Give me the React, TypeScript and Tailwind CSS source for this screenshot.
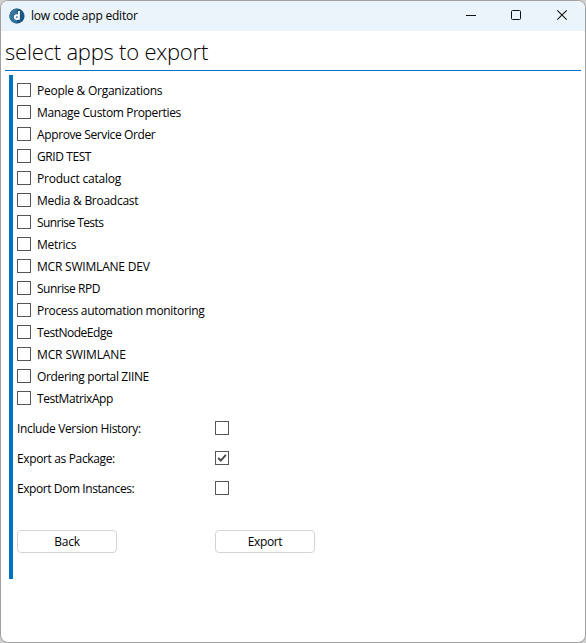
const apps: [string, string][] = [
  ['People & Organizations', 'tracking-[-0.26px]'],
  ['Manage Custom Properties', 'tracking-[-0.35px]'],
  ['Approve Service Order', 'tracking-[-0.38px]'],
  ['GRID TEST', 'tracking-[-0.42px]'],
  ['Product catalog', 'tracking-[-0.22px]'],
  ['Media & Broadcast', 'tracking-[-0.27px]'],
  ['Sunrise Tests', 'tracking-[-0.58px]'],
  ['Metrics', 'tracking-[-0.3px]'],
  ['MCR SWIMLANE DEV', 'tracking-[-0.2px]'],
  ['Sunrise RPD', 'tracking-[-0.48px]'],
  ['Process automation monitoring', 'tracking-[-0.32px]'],
  ['TestNodeEdge', 'tracking-[-0.48px]'],
  ['MCR SWIMLANE', 'tracking-[-0.12px]'],
  ['Ordering portal ZIINE', 'tracking-[-0.34px]'],
  ['TestMatrixApp', 'tracking-[-0.44px]'],
];

const options: { label: string; tracking: string; checked: boolean }[] = [
  { label: 'Include Version History:', tracking: 'tracking-[-0.36px]', checked: false },
  { label: 'Export as Package:', tracking: 'tracking-[-0.36px]', checked: true },
  { label: 'Export Dom Instances:', tracking: 'tracking-[-0.42px]', checked: false },
];

function CheckBox({ checked = false }: { checked?: boolean }) {
  return (
    <span
      role="checkbox"
      aria-checked={checked}
      className="flex size-[14px] shrink-0 items-center justify-center border border-[#555555] bg-white"
    >
      {checked && (
        <svg width="12" height="12" viewBox="0 0 12 12" fill="none" className="shrink-0">
          <path d="M2.2 6 4.8 8.6 9.9 2.9" stroke="#4a4a4a" strokeWidth="2" />
        </svg>
      )}
    </span>
  );
}

function TitleBar() {
  return (
    <header className="flex h-[30px] shrink-0 items-center bg-[#ebf4fa] pl-2">
      <svg width="16" height="16" viewBox="0 0 16 16" className="shrink-0">
        <circle cx="8" cy="8" r="7.6" fill="#1b5680" />
        <path d="M8 .4a7.6 7.6 0 0 0 0 15.2z" fill="#34749b" />
        <path d="M9.9 3v8.8M9.7 9.1a1.9 1.9 0 1 1-3.8 0 1.9 1.9 0 0 1 3.8 0z" stroke="#fff" strokeWidth="1.9" fill="none" />
      </svg>
      <span className="ml-[6px] text-[12px] tracking-[-0.22px]">low code app editor</span>
      <div className="ml-auto flex h-full items-center text-[#111]">
        <svg width="46" height="30" viewBox="0 0 46 30" fill="none" stroke="currentColor">
          <path d="M19 14.5h10" />
        </svg>
        <svg width="46" height="30" viewBox="0 0 46 30" fill="none" stroke="currentColor">
          <rect x="18.5" y="9.5" width="9" height="9" rx="1" />
        </svg>
        <svg width="46" height="30" viewBox="0 0 46 30" fill="none" stroke="currentColor" strokeWidth="1.1">
          <path d="m18.3 9.3 9.4 9.4m0-9.4-9.4 9.4" />
        </svg>
      </div>
    </header>
  );
}

export default function App() {
  return (
    <div className="h-[643px] w-[586px] bg-[#cfcfcf] font-['Open_Sans','Noto_Sans',sans-serif] text-[12px] leading-4 text-black">
      <div className="flex h-full flex-col overflow-hidden rounded-[8px] border border-[#a0a0a0] bg-white">
        <TitleBar />
        <main className="flex flex-col px-1">
          <div className="flex h-10 items-center border-b border-[#0072c6]">
            <h1 className="text-[22px] leading-8 font-light tracking-[-0.22px]">select apps to export</h1>
          </div>
          <section className="mt-1 ml-1 flex h-[504px] flex-col border-l-4 border-[#0072c6] pt-1 pl-1">
            {apps.map(([name, tracking]) => (
              <div key={name} className="flex h-[22px] items-center gap-[6px]">
                <CheckBox />
                <span className={`pt-0.5 ${tracking}`}>{name}</span>
              </div>
            ))}
            <div className="mt-1 flex flex-col">
              {options.map((o) => (
                <div key={o.label} className="flex h-[30px] items-center">
                  <span className={`w-[198px] pt-0.5 ${o.tracking}`}>{o.label}</span>
                  <CheckBox checked={o.checked} />
                </div>
              ))}
            </div>
            <div className="mt-[27px] flex gap-[98px]">
              <button className="h-[23px] w-[100px] rounded-[4px] border border-[#d4d4d4] tracking-[-0.2px]">Back</button>
              <button className="h-[23px] w-[100px] rounded-[4px] border border-[#d4d4d4] tracking-[-0.4px]">Export</button>
            </div>
          </section>
        </main>
      </div>
    </div>
  );
}
